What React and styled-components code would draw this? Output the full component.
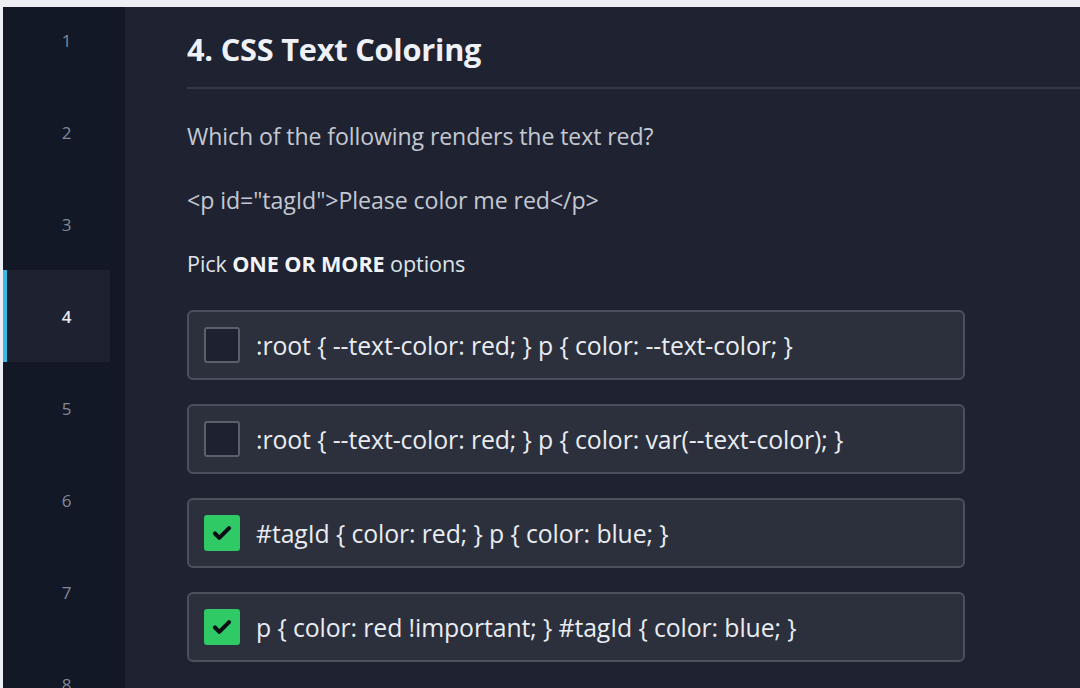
import React from "react";
import styled, { createGlobalStyle } from "styled-components";

const Global = createGlobalStyle`
  html, body { margin: 0; padding: 0; background: #eceef3; }
  body { font-family: "Open Sans", "Noto Sans", sans-serif; overflow: hidden; }
`;

const Frame = styled.div`
  padding: 7px 0 0 3px;
  height: 688px;
  box-sizing: border-box;
`;

const Page = styled.div`
  display: flex;
  height: 681px;
  background: #1f2331;
  overflow: hidden;
`;

const Sidebar = styled.nav`
  width: 122px;
  flex: none;
  background: #121826;
  display: flex;
  flex-direction: column;
`;

const NavItem = styled.div`
  width: 107px;
  height: 92px;
  flex: none;
  box-sizing: border-box;
  display: flex;
  align-items: center;
  justify-content: center;
  padding-left: 16px;
  border-left: 4px solid ${(p) => (p.$active ? "#3fb6e4" : "transparent")};
  background: ${(p) => (p.$active ? "#1e2230" : "transparent")};
  color: ${(p) => (p.$active ? "#e8ebf0" : "#818998")};
  font-size: 17px;
  font-weight: ${(p) => (p.$active ? 600 : 400)};
  margin-top: ${(p) => (p.$first ? "-13px" : "0")};
`;

const Main = styled.main`
  flex: 1;
  padding: 22px 0 0 62px;
  display: flex;
  flex-direction: column;
`;

const Title = styled.h1`
  margin: 0;
  font-size: 30.7px;
  font-weight: 700;
  color: #eef1f6;
  line-height: 40px;
  letter-spacing: -0.2px;
`;

const Divider = styled.div`
  height: 2px;
  background: #343947;
  margin-top: 18px;
`;

const Question = styled.p`
  margin: 30px 0 0;
  font-size: 23.1px;
  line-height: 34px;
  color: #c3c8d2;
  letter-spacing: -0.1px;
`;

const Code = styled(Question)`
  font-size: 23.2px;
`;

const Hint = styled.p`
  margin: 30px 0 0;
  font-size: 21.6px;
  line-height: 34px;
  color: #dfe3ea;
  letter-spacing: -0.1px;
  b { font-weight: 700; color: #f2f4f8; }
`;

const Options = styled.div`
  display: flex;
  flex-direction: column;
  gap: 24px;
  margin-top: 29px;
  width: 778px;
`;

const Option = styled.label`
  display: flex;
  align-items: center;
  gap: 16px;
  height: 70px;
  box-sizing: border-box;
  padding: 0 15px;
  background: #2c303d;
  border: 2px solid #4b505d;
  border-radius: 6px;
  font-size: 24.8px;
  color: #e9ecf1;
  letter-spacing: -0.1px;
`;

const Box = styled.span`
  width: 36px;
  height: 36px;
  flex: none;
  box-sizing: border-box;
  border-radius: 3px;
  display: flex;
  align-items: center;
  justify-content: center;
  background: ${(p) => (p.$checked ? "#2fc965" : "#1e2230")};
  border: 2px solid ${(p) => (p.$checked ? "#2fc965" : "#5a5f6b")};
`;

const Check = () => (
  <svg width="26" height="26" viewBox="0 0 24 24" fill="none">
    <path d="M5.5 12.5l4 4L18.5 7.5" stroke="#0b0f14" strokeWidth="3.8" strokeLinecap="round" strokeLinejoin="round" />
  </svg>
);

const options = [
  { text: ":root { --text-color: red; } p { color: --text-color; }", checked: false },
  { text: ":root { --text-color: red; } p { color: var(--text-color); }", checked: false },
  { text: "#tagId { color: red; } p { color: blue; }", checked: true },
  { text: "p { color: red !important; } #tagId { color: blue; }", checked: true },
];

export default function App() {
  return (
    <>
      <Global />
      <Frame>
        <Page>
          <Sidebar>
            {[1, 2, 3, 4, 5, 6, 7, 8].map((n) => (
              <NavItem key={n} $active={n === 4} $first={n === 1}>
                {n}
              </NavItem>
            ))}
          </Sidebar>
          <Main>
            <Title>4. CSS Text Coloring</Title>
            <Divider />
            <Question>Which of the following renders the text red?</Question>
            <Code>{'<p id="tagId">Please color me red</p>'}</Code>
            <Hint>
              Pick <b>ONE OR MORE</b> options
            </Hint>
            <Options>
              {options.map((o, i) => (
                <Option key={i}>
                  <Box $checked={o.checked}>{o.checked && <Check />}</Box>
                  {o.text}
                </Option>
              ))}
            </Options>
          </Main>
        </Page>
      </Frame>
    </>
  );
}
